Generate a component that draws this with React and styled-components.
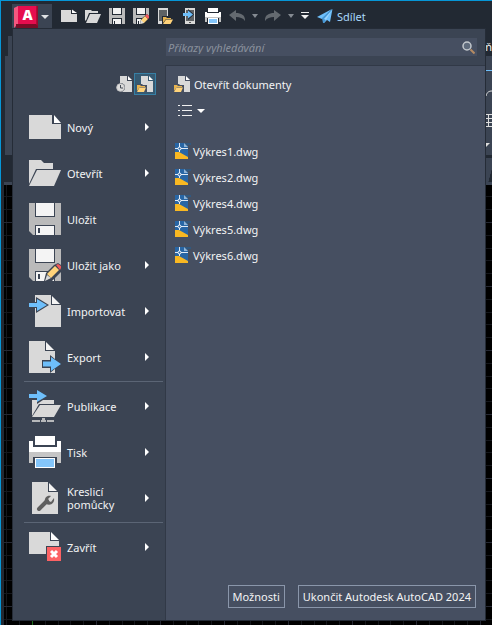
import React from 'react';
import styled, { createGlobalStyle } from 'styled-components';

const colors = {
  frame: '#222933',
  panel: '#3b4453',
  pane: '#464f61',
  text: '#f2f3f4',
  page: '#d9d9d9',
  blue: '#6ebffb',
  accent: '#0696d7',
};

/* ---------- small icons (16 x 16) ---------- */

const Small = ({ children, width = 16 }) => (
  <svg width={width} height="16" viewBox={`0 0 ${width} 16`} aria-hidden="true">{children}</svg>
);

const Down = ({ width = 8, height = 4, color = '#dfe1e4' }) => (
  <svg width={width} height={height} viewBox="0 0 8 4" preserveAspectRatio="none" aria-hidden="true">
    <path d="M0 0h8L4 4z" fill={color} />
  </svg>
);

const SmallNew = () => (
  <Small>
    <path d="M0 2h10v4h6v8H0z" fill={colors.page} />
    <path d="M11 1.5 16 5h-5z" fill="#fff" />
  </Small>
);

const SmallOpen = () => (
  <Small>
    <path d="M0 2h6l1 1h6v2H4L1 12.500H0z" fill={colors.page} />
    <path d="M5 6h11l-4 9H1z" fill={colors.page} />
  </Small>
);

const SmallFloppy = () => (
  <>
    <path d="M0 0h16v16H1l-1-1z" fill="#bababa" />
    <path d="M3 0h10v7H3zM3 10h10v6H3z" fill={colors.frame} />
    <path d="M4 0h8v6H4zM4 11h8v5H4z" fill="#f2f2f2" />
    <path d="M5 13h1v3H5z" fill={colors.frame} />
  </>
);

const SmallSave = () => <Small><SmallFloppy /></Small>;

const SmallSaveAs = () => (
  <Small>
    <SmallFloppy />
    <path d="m7 16 1-5 6-5 2 2v8z" fill={colors.frame} />
    <path d="m8 12 4-4 3 3-4 4-3 .500z" fill="#ffd37a" />
    <path d="m12 8 2-2 2 2v2l-1 1z" fill="#f2595b" />
    <path d="m7 16 1-4 3 3z" fill="#ddd" />
  </Small>
);

const SmallFromPhone = () => (
  <Small>
    <path d="M1 0h10v16H1z" fill={colors.page} />
    <path d="M2 2h8v11H2z" fill="#5e6265" />
    <path d="M5 8h11v8H5z" fill={colors.frame} />
    <path d="M6 9h3l1 1h4v1H9l-3 4z" fill="#e8b450" />
    <path d="M9 11.500h7L13.500 16H6z" fill="#ffd37a" />
  </Small>
);

const SmallToPhone = () => (
  <Small>
    <path d="M4 0h10v16H4z" fill={colors.page} />
    <path d="M5 2h8v11H5z" fill="#5e6265" />
    <path d="M8 14h2v1H8z" fill="#555" />
    <path d="M1 5h6V1l6 5.500L7 12V8H1z" fill={colors.frame} />
    <path d="M2 5h5V2.500l5 4L7 10.500V8H2z" fill={colors.blue} />
  </Small>
);

const SmallPrint = () => (
  <Small>
    <path d="M3 0h10v4H3z" fill="#fff" />
    <path d="M0 4h2v1h12V4h2v5H0z" fill="#fff" />
    <path d="M0 9h16v5H0z" fill="#c3c3c3" />
    <path d="M2 10h12v6H2z" fill={colors.frame} />
    <path d="M3 10h10v6H3z" fill="#fff" />
    <path d="M4 11h8v4H4z" fill="#84c6fb" />
  </Small>
);

const Undo = ({ flip }) => (
  <Small>
    <path
      transform={flip ? 'matrix(-1 0 0 1 16 0)' : undefined}
      d="M0 7 7 2v3c5 0 9 2 9 7v1c-2-3-5-4-9-4v4z"
      fill="#646a70"
    />
  </Small>
);

const Customize = () => (
  <Small width={8}>
    <path d="M0 4h8v1H0zM0 7h8l-4 4z" fill="#f0f0f0" />
  </Small>
);

const Plane = () => (
  <Small>
    <path d="M0 9 15 1 5 11zM6 11 15.500 1 13 14l-3-2-3 3z" fill={colors.blue} />
    <path d="M5 10 15 1 7 15H6z" fill="#4798d6" />
    <path d="m7 11 8-9-6 10z" fill="#9ad5ff" />
  </Small>
);

const Recent = () => (
  <Small>
    <path d="M4 0h7v5h5v11H4z" fill={colors.page} />
    <path d="M12 0v4h4z" fill="#fff" />
    <circle cx="4.500" cy="11.500" r="4.500" fill={colors.panel} />
    <circle cx="4.500" cy="11.500" r="3.800" fill="#ddd" stroke="#c6c6c6" />
    <path d="M4.500 9v3H7" fill="none" stroke="#444b55" />
  </Small>
);

const OpenDocs = () => (
  <Small>
    <path d="M4 0h7v5h5v11H4z" fill={colors.page} />
    <path d="M12 0v4h4z" fill="#fff" />
    <path d="M0 8h5l1 1h4v7H0z" fill={colors.pane} />
    <path d="M0 9h3l1 1h4v1H3l-3 4z" fill="#e8b450" />
    <path d="M2.500 11.500H9L7 16H0z" fill="#ffd37a" />
  </Small>
);

const DwgIcon = () => (
  <Small>
    <path d="M0 0h9v4h4v12H0z" fill="#2866a5" />
    <path d="M9 0h7v2h-3v2H9z" fill="#31587f" />
    <path d="m9 0 4 4H9z" fill="#8fb4d8" />
    <path d="M0 9h4l9 5v2H0z" fill="#f9b822" />
    <path d="M4.500 0v9M0 5.500h13" stroke="#dfe9f4" fill="none" />
    <circle cx="4.500" cy="5.500" r="1.500" fill="#2866a5" stroke="#fff" />
  </Small>
);

const Magnifier = () => (
  <svg width="13" height="13" viewBox="0 0 13 13" aria-hidden="true">
    <circle cx="5" cy="5" r="4" fill="#5f6b7c" stroke="#c3c8cd" strokeWidth="1.500" />
    <path d="m8.500 8.500 4 4" stroke="#b58b63" strokeWidth="2" />
  </svg>
);

const ListLines = () => (
  <svg width="14" height="12" viewBox="0 0 14 12" aria-hidden="true">
    <path d="M0 .5h2m2 0h10M0 5.500h2m2 0h10M0 10.500h2m2 0h10" stroke="#f0f0f0" />
  </svg>
);

const Logo = () => (
  <svg width="24" height="22" viewBox="0 0 24 22" aria-hidden="true">
    <path d="m0 2 4-2v18l-4 4z" fill="#f4587f" />
    <path d="M2 18 4 18h18V0h2v22H2z" fill="#7a0c27" />
    <path d="M22 0h1.500v20L22 18z" fill="#b10b35" />
    <path d="M4 0h18v18H4z" fill="#e60d4e" />
    <text x="13.500" y="14" textAnchor="middle" fontFamily="'Open Sans', sans-serif" fontWeight="800" fontSize="14" fill="#fff">A</text>
  </svg>
);

/* ---------- large icons (32 x 32) ---------- */

const Large = ({ children }) => (
  <svg width="32" height="32" viewBox="0 0 32 32" aria-hidden="true">{children}</svg>
);

const NewIcon = () => (
  <Large>
    <path d="M0 4h23v9h9v15H0z" fill={colors.page} />
    <path d="M25 4v8h7z" fill="#fff" />
  </Large>
);

const OpenIcon = () => (
  <Large>
    <path d="M0 3h12l3 3h9v6H7L0 27z" fill={colors.page} />
    <path d="M8 13h24l-7 16H0z" fill={colors.page} />
  </Large>
);

const Floppy = () => (
  <>
    <path d="M0 0h32v32H4l-4-4z" fill="#bababa" />
    <path d="M6 0h20v14H6zM6 22h20v10H6z" fill={colors.panel} />
    <path d="M7 0h18v13H7zM7 23h18v9H7z" fill="#f4f4f4" />
    <path d="M9 25h2v5H9z" fill={colors.panel} />
  </>
);

const SaveIcon = () => <Large><Floppy /></Large>;

const SaveAsIcon = () => (
  <Large>
    <Floppy />
    <path d="m15 32 2-8 8-8 4-2 3 2v7l-9 9z" fill={colors.panel} />
    <path d="m18 25 8-8 4 4-8 8z" fill="#ffd37a" />
    <path d="m27 16 2-1 3 2v2l-1 2z" fill="#f2595b" />
    <path d="m16 32 2-6 4 3z" fill="#d9d9d9" />
  </Large>
);

const ImportIcon = () => (
  <Large>
    <path d="M6 0h16v10h10v22H6z" fill={colors.page} />
    <path d="M23 1v8h8z" fill="#f4f4f4" />
    <path d="M0 7h7V2l13 8-13 8v-5H0z" fill={colors.panel} />
    <path d="M0 8h8V4l10 6-10 6v-4H0z" fill={colors.blue} />
  </Large>
);

const ExportIcon = () => (
  <Large>
    <path d="M0 0h16v10h10v22H0z" fill={colors.page} />
    <path d="M17 1v8h8z" fill="#f4f4f4" />
    <path d="M13 19h8v-5l11 9-11 9v-5h-8z" fill={colors.panel} />
    <path d="M14 20.500h8V16l10 7-10 7v-4.500h-8z" fill={colors.blue} />
  </Large>
);

const PublishIcon = () => (
  <Large>
    <path d="M3 10h22v4H10L3 26z" fill={colors.page} />
    <path d="M11 15h21l-7 12H3z" fill={colors.page} />
    <path d="M0 3h7V0l13 6-12 8V9H0z" fill={colors.panel} />
    <path d="M0 4h8V0l10 6-10 6V8H0z" fill={colors.blue} />
    <path d="M3 30h8v2H3zM12 30h5v2h-5zM18 30h7v2h-7zM13 28h3v2h-3z" fill="#b7b9bb" />
  </Large>
);

const PrintIcon = () => (
  <Large>
    <path d="M6 0h20v9H6z" fill="#fff" />
    <path d="M0 5h4v6h24V5h4v11H0z" fill="#fff" />
    <path d="M0 16h32v11H0z" fill="#c6c6c6" />
    <path d="M4 21h24v11H4z" fill={colors.panel} />
    <path d="M6 22h20v10H6z" fill="#fff" />
    <path d="M7 23h18v8H7z" fill="#84c6fb" />
  </Large>
);

const ToolsIcon = () => (
  <Large>
    <path d="M3 0h16v10h10v22H3z" fill={colors.page} />
    <path d="M20 1v8h8z" fill="#f4f4f4" />
    <path d="m10 27 8-8" stroke="#5f5f5f" strokeWidth="4" strokeLinecap="round" />
    <path d="M16 20c-1-4 2-7 6-6l-3 3 1 2 2 1 3-4c1 5-3 8-8 6z" fill="#5f5f5f" />
  </Large>
);

const CloseIcon = () => (
  <Large>
    <path d="M0 1h21v9h9v13H0z" fill={colors.page} />
    <path d="M22 1v8h8z" fill="#fff" />
    <path d="M17 15h15v15H17z" fill={colors.panel} />
    <path d="M18 16h14v14H18z" fill="#fc6264" />
    <path d="m22 20 6 6m0-6-6 6" stroke="#fff" strokeWidth="3" />
  </Large>
);

const RibbonEdge = () => (
  <svg width="6" height="99" viewBox="0 0 6 99" aria-hidden="true">
    <path d="M0 14h6v1H0z" fill={colors.blue} />
    <path d="M0 40c1-4 3-5 6-5" fill="none" stroke="#ddd" />
    <path d="M0 58.500h6m-6 4h6m-6 4h6m-6 4h6M2.500 58v13" fill="none" stroke="#ddd" />
    <path d="M0 87h4l-4 4z" fill="#ddd" />
  </svg>
);

/* ---------- data ---------- */

const menuItems = [
  { label: 'Nový', icon: NewIcon, sub: true },
  { label: 'Otevřít', icon: OpenIcon, sub: true },
  { label: 'Uložit', icon: SaveIcon },
  { label: 'Uložit jako', icon: SaveAsIcon, sub: true },
  { label: 'Importovat', icon: ImportIcon, sub: true },
  { label: 'Export', icon: ExportIcon, sub: true, line: true },
  { label: 'Publikace', icon: PublishIcon, sub: true },
  { label: 'Tisk', icon: PrintIcon, sub: true },
  { label: 'Kreslicí pomůcky', icon: ToolsIcon, sub: true, line: true },
  { label: 'Zavřít', icon: CloseIcon, sub: true },
];

const quickTools = [
  { name: 'Nový', icon: SmallNew },
  { name: 'Otevřít', icon: SmallOpen },
  { name: 'Uložit', icon: SmallSave },
  { name: 'Uložit jako', icon: SmallSaveAs },
  { name: 'Otevřít z mobilu', icon: SmallFromPhone },
  { name: 'Uložit do mobilu', icon: SmallToPhone },
  { name: 'Tisk', icon: SmallPrint },
];

const files = ['Výkres1.dwg', 'Výkres2.dwg', 'Výkres4.dwg', 'Výkres5.dwg', 'Výkres6.dwg'];

function QuickAccess() {
  return (
    <Toolbar>
      <LogoButton aria-label="AutoCAD">
        <Logo />
        <Down />
      </LogoButton>
      <Tools>
        {quickTools.map(({ name, icon: Icon }) => (
          <ToolButton key={name} aria-label={name}><Icon /></ToolButton>
        ))}
      </Tools>
      <History>
        <ToolButton aria-label="Zpět"><Undo /></ToolButton>
        <ToolButton aria-label="Seznam zpět"><Down width={6} height={4} color="#858b92" /></ToolButton>
        <ToolButton aria-label="Znovu"><Undo flip /></ToolButton>
        <ToolButton aria-label="Seznam znovu"><Down width={6} height={4} color="#858b92" /></ToolButton>
        <ToolButton aria-label="Přizpůsobit"><Customize /></ToolButton>
      </History>
      <ShareButton><Plane />Sdílet</ShareButton>
    </Toolbar>
  );
}

function AppMenu() {
  return (
    <Menu>
      <SearchRow>
        <SearchBox>
          <SearchInput type="text" placeholder="Příkazy vyhledávání" aria-label="Příkazy vyhledávání" />
          <Magnifier />
        </SearchBox>
      </SearchRow>
      <MenuBody>
        <SideColumn>
          <ViewSwitch>
            <ViewButton aria-label="Poslední dokumenty"><Recent /></ViewButton>
            <ViewButton aria-label="Otevřít dokumenty" $active><OpenDocs /></ViewButton>
          </ViewSwitch>
          {menuItems.map(({ label, icon: Icon, sub, line }) => (
            <React.Fragment key={label}>
              <MenuItem>
                <Icon />
                <MenuLabel>{label}</MenuLabel>
                {sub && (
                  <svg width="4" height="8" viewBox="0 0 4 8" aria-hidden="true">
                    <path d="M0 0v8l4-4z" fill="#fff" />
                  </svg>
                )}
              </MenuItem>
              {line && <Separator />}
            </React.Fragment>
          ))}
        </SideColumn>
        <Documents>
          <DocumentsTitle><OpenDocs />Otevřít dokumenty</DocumentsTitle>
          <ListMode aria-label="Zobrazení"><ListLines /><Down color="#fff" /></ListMode>
          <FileList>
            {files.map((file) => (
              <li key={file}>
                <FileLink href="#"><DwgIcon />{file}</FileLink>
              </li>
            ))}
          </FileList>
          <Footer>
            <FooterButton>Možnosti</FooterButton>
            <FooterButton>Ukončit Autodesk AutoCAD 2024</FooterButton>
          </Footer>
        </Documents>
      </MenuBody>
    </Menu>
  );
}

export default function App() {
  return (
    <Frame>
      <GlobalStyle />
      <QuickAccess />
      <Workspace>
        <RibbonTabs><RibbonTab />ň</RibbonTabs>
        <Ribbon><RibbonEdge /></Ribbon>
        <FileTabs><FileTab /></FileTabs>
        <Canvas />
      </Workspace>
      <AppMenu />
    </Frame>
  );
}

const GlobalStyle = createGlobalStyle`
  * {
    box-sizing: border-box;
  }
  body {
    margin: 0;
    background: #000;
  }
  body, button, input {
    font-family: 'Noto Sans', 'Open Sans', sans-serif;
    font-size: 11px;
    line-height: 13px;
    color: ${colors.text};
  }
  button {
    padding: 0;
    border: 0;
    background: none;
    cursor: pointer;
  }
  svg {
    display: block;
    flex-shrink: 0;
  }
`

const Frame = styled.div`
  min-height: 100vh;
  display: grid;
  grid-template-columns: minmax(0, 1fr);
  grid-template-rows: 27px 1fr;
  border-top: 1px solid ${colors.accent};
  border-left: 1px solid ${colors.accent};
  background: ${colors.frame};
`

const Toolbar = styled.header`
  display: flex;
  align-items: center;
  padding: 3px 0 0 11px;
`

const LogoButton = styled.button`
  display: flex;
  align-items: center;
  gap: 3px;
  height: 24px;
  padding: 1px 3px 0 2px;
  background: ${colors.panel};
`

const Tools = styled.div`
  display: flex;
  gap: 8px;
  margin-left: 9px;
`

const ToolButton = styled.button`
  display: flex;
  align-items: center;
`

const History = styled.div`
  display: flex;
  gap: 7px;
  margin-left: 8px;
`

const ShareButton = styled.button`
  display: flex;
  align-items: center;
  gap: 4px;
  margin-left: 8px;
  font-size: 11px;
  color: #a9d8fb;
`

/* the ribbon and the drawing lie under the open menu, in the same grid cell */
const Workspace = styled.main`
  grid-area: 2 / 1;
  display: flex;
  flex-direction: column;
`

const RibbonTabs = styled.div`
  display: flex;
  align-items: flex-end;
  justify-content: space-between;
  height: 28px;
  padding-left: 7px;
  line-height: 18px;
`

const RibbonTab = styled.div`
  width: 48px;
  height: 20px;
  background: ${colors.panel};
`

const Ribbon = styled.div`
  display: flex;
  justify-content: flex-end;
  margin-left: 4px;
  background: ${colors.panel};
`

const FileTabs = styled.div`
  display: flex;
  justify-content: flex-end;
  height: 30px;
  margin-left: 3px;
  padding-top: 3px;
  border-bottom: 3px solid ${colors.panel};
`

const FileTab = styled.div`
  width: 32px;
  background: linear-gradient(105deg, ${colors.panel} 90%, ${colors.frame} 91%);
`

const Canvas = styled.div`
  flex: 1;
  margin-left: 3px;
  background-color: #000;
  background-image:
    linear-gradient(90deg, #1c6b1c 1px, transparent 1px),
    linear-gradient(#252833 1px, transparent 1px),
    linear-gradient(90deg, #252833 1px, transparent 1px),
    linear-gradient(transparent 13px, #15171c 13px 14px, transparent 14px 26px, #15171c 26px 27px, transparent 27px 38px, #15171c 38px 39px, transparent 39px 51px, #15171c 51px 52px, transparent 52px),
    linear-gradient(90deg, transparent 13px, #15171c 13px 14px, transparent 14px 26px, #15171c 26px 27px, transparent 27px 38px, #15171c 38px 39px, transparent 39px 51px, #15171c 51px 52px, transparent 52px);
  background-repeat: repeat-y, repeat, repeat, repeat, repeat;
  background-size: 64px 64px;
  background-position: 28px 37px;
`

const Menu = styled.section`
  grid-area: 2 / 1;
  display: flex;
  flex-direction: column;
  margin: 0 6px 4px 11px;
  border: 1px solid #252c37;
  background: ${colors.panel};
`

const SearchRow = styled.div`
  display: flex;
  padding: 9px 8px 9px 153px;
`

const SearchBox = styled.label`
  flex: 1;
  display: flex;
  align-items: center;
  height: 18px;
  padding: 0 2px;
  background: ${colors.pane};
`

const SearchInput = styled.input`
  flex: 1;
  min-width: 0;
  padding: 0;
  border: 0;
  outline: none;
  background: none;
  font-style: italic;
  &::placeholder {
    color: #8a919d;
  }
`

const MenuBody = styled.div`
  flex: 1;
  display: flex;
`

const SideColumn = styled.nav`
  width: 152px;
  padding: 8px 2px 0 11px;
`

const ViewSwitch = styled.div`
  display: flex;
  justify-content: flex-end;
  margin-bottom: 9px;
  padding-right: 7px;
`

const ViewButton = styled.button`
  display: grid;
  place-items: center;
  width: ${(props) => (props.$active ? '22px' : '20px')};
  height: 22px;
  border: 1px solid ${(props) => (props.$active ? '#3780a5' : 'transparent')};
  background: ${(props) => (props.$active ? '#365a72' : 'none')};
`

const MenuItem = styled.button`
  display: flex;
  align-items: center;
  gap: 6px;
  width: 100%;
  height: 46px;
  padding: 0 14px 0 5px;
  text-align: left;
`

const MenuLabel = styled.span`
  flex: 1;
`

const Separator = styled.hr`
  height: 1px;
  margin: 1px 0;
  border: 0;
  background: #5b6575;
`

const Documents = styled.div`
  flex: 1;
  display: flex;
  flex-direction: column;
  border-top: 1px solid #313947;
  border-left: 1px solid #313947;
  background: ${colors.pane};
`

const DocumentsTitle = styled.div`
  display: flex;
  align-items: center;
  gap: 4px;
  padding: 10px 8px 13px;
`

const ListMode = styled.button`
  display: flex;
  align-items: center;
  align-self: flex-start;
  gap: 5px;
  padding: 0 12px;
`

const FileList = styled.ul`
  margin: 21px 0 0;
  padding: 0 0 0 9px;
  list-style: none;
`

const FileLink = styled.a`
  display: flex;
  align-items: center;
  gap: 2px;
  height: 26px;
  color: inherit;
  text-decoration: none;
`

const Footer = styled.div`
  display: flex;
  justify-content: flex-end;
  gap: 13px;
  margin-top: auto;
  padding: 12px 9px;
`

const FooterButton = styled.button`
  height: 23px;
  padding: 0 4px;
  border: 1px solid #8a96aa;
`
